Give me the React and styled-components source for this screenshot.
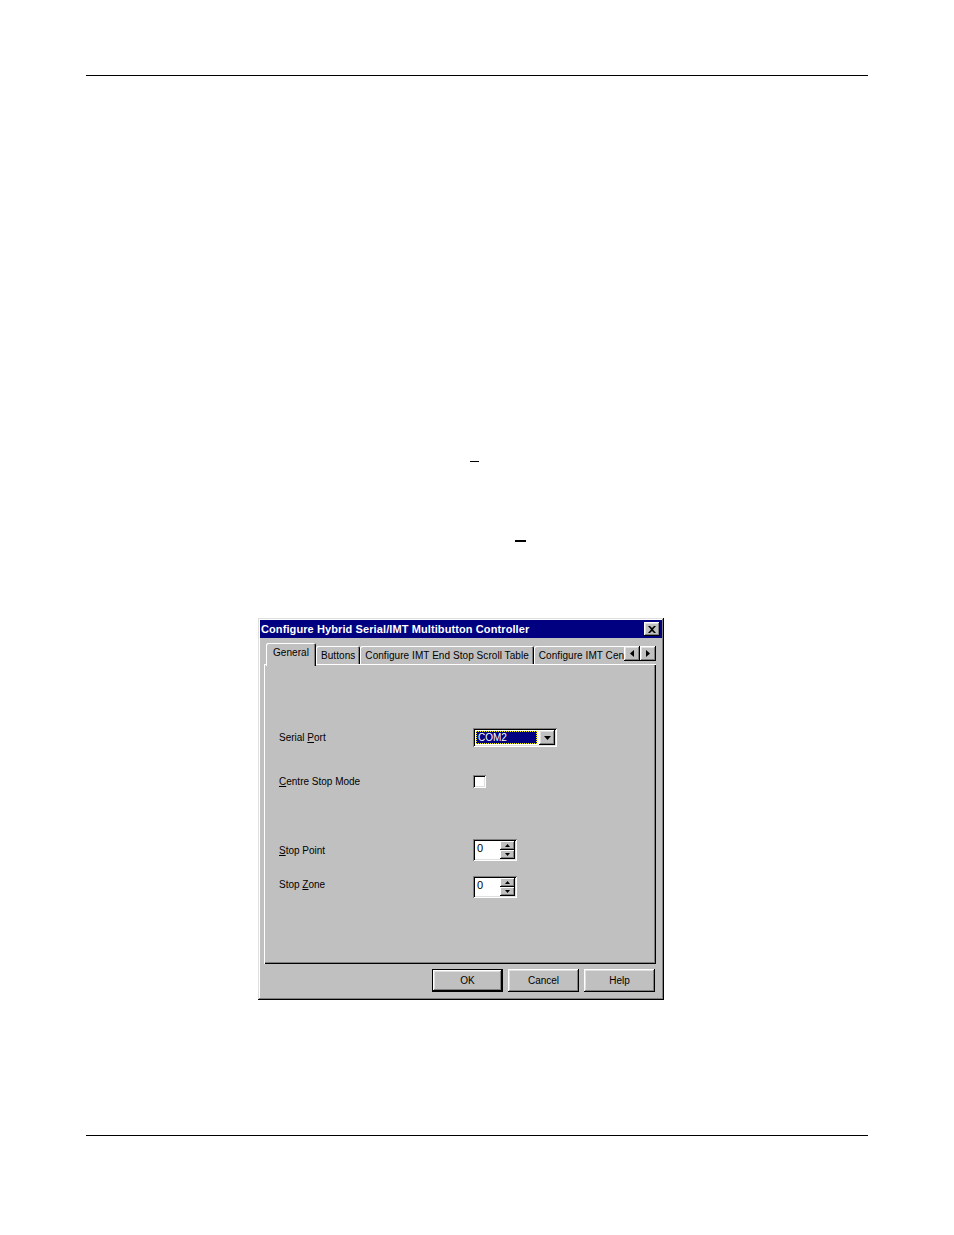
import styled, { createGlobalStyle } from "styled-components";

const GlobalStyle = createGlobalStyle`
  html, body {
    margin: 0;
    padding: 0;
    background: #fff;
  }
  body {
    font-family: "Liberation Sans", Arial, sans-serif;
    color: #000;
  }
`;

const raised = `
  box-shadow:
    inset -1px -1px 0 #000,
    inset 1px 1px 0 #fff,
    inset -2px -2px 0 #808080,
    inset 2px 2px 0 #dfdfdf;
`;

const sunken = `
  box-shadow:
    inset 1px 1px 0 #808080,
    inset -1px -1px 0 #fff,
    inset 2px 2px 0 #000,
    inset -2px -2px 0 #dfdfdf;
`;

// the last tab is cut by the scroll arrows in the original
const tabs = [
  { label: "General", selected: true },
  { label: "Buttons" },
  { label: "Configure IMT End Stop Scroll Table" },
  { label: "Configure IMT Cen" },
];

function Accel({ text, at }) {
  return (
    <>
      {text.slice(0, at)}
      <u>{text[at]}</u>
      {text.slice(at + 1)}
    </>
  );
}

function Triangle({ dir }) {
  const pts = {
    down: "0,0 7,0 3.5,4",
    up: "0,3 5,3 2.5,0",
    downSmall: "0,0 5,0 2.5,3",
    left: "4,0 4,7 0,3.5",
    right: "0,0 0,7 4,3.5",
  }[dir];
  const size = {
    down: [7, 4],
    up: [5, 3],
    downSmall: [5, 3],
    left: [4, 7],
    right: [4, 7],
  }[dir];
  return (
    <svg width={size[0]} height={size[1]} viewBox={`0 0 ${size[0]} ${size[1]}`}>
      <polygon points={pts} fill="#000" />
    </svg>
  );
}

function Spinner({ value }) {
  return (
    <SpinBox>
      <SpinValue>{value}</SpinValue>
      <SpinButtons>
        <SpinButton>
          <Triangle dir="up" />
        </SpinButton>
        <SpinButton>
          <Triangle dir="downSmall" />
        </SpinButton>
      </SpinButtons>
    </SpinBox>
  );
}

export default function App() {
  return (
    <Page>
      <GlobalStyle />
      <Rule $top={75} />
      <Mark $top={385} $left={470} $w={9} $h={1} />
      <Mark $top={78} $left={515} $w={11} $h={2} />

      <Dialog>
        <TitleBar>
          <TitleText>Configure Hybrid Serial/IMT Multibutton Controller</TitleText>
          <CloseButton>
            <svg width="8" height="7" viewBox="0 0 8 7">
              <path d="M0 0h2l2 2 2-2h2L5 3.5 8 7H6L4 5 2 7H0l3-3.5z" fill="#000" />
            </svg>
          </CloseButton>
        </TitleBar>

        <Body>
          <TabStrip>
            <TabList>
              {tabs.map((t) => (
                <Tab key={t.label} $selected={t.selected}>
                  {t.label}
                </Tab>
              ))}
            </TabList>
            <ScrollArrows>
              <ArrowButton>
                <Triangle dir="left" />
              </ArrowButton>
              <ArrowButton>
                <Triangle dir="right" />
              </ArrowButton>
            </ScrollArrows>
          </TabStrip>

          <Panel>
            <Row $top={64} $h={19}>
              <Label>
                <Accel text="Serial Port" at={7} />
              </Label>
              <Combo>
                <ComboField>COM2</ComboField>
                <ComboButton>
                  <Triangle dir="down" />
                </ComboButton>
              </Combo>
            </Row>
            <Row $top={28} $h={13}>
              <Label>
                <Accel text="Centre Stop Mode" at={0} />
              </Label>
              <Checkbox />
            </Row>
            <Row $top={51} $h={22}>
              <Label>
                <Accel text="Stop Point" at={0} />
              </Label>
              <Spinner value="0" />
            </Row>
            <Row $top={15} $h={22}>
              <Label $raise={3}>
                <Accel text="Stop Zone" at={5} />
              </Label>
              <Spinner value="0" />
            </Row>
          </Panel>

          <ButtonRow>
            <PushButton $default>OK</PushButton>
            <PushButton>Cancel</PushButton>
            <PushButton>Help</PushButton>
          </ButtonRow>
        </Body>
      </Dialog>

      <Rule $top={135} />
    </Page>
  );
}

const Page = styled.div`
  width: 954px;
  height: 1235px;
  display: flex;
  flex-direction: column;
  align-items: flex-start;
  overflow: hidden;
`;

const Rule = styled.div`
  margin: ${(p) => p.$top}px 0 0 86px;
  width: 782px;
  height: 1px;
  background: #000;
`;

const Mark = styled.div`
  margin: ${(p) => p.$top}px 0 0 ${(p) => p.$left}px;
  width: ${(p) => p.$w}px;
  height: ${(p) => p.$h}px;
  background: #000;
`;

const Dialog = styled.div`
  margin: 76px 0 0 258px;
  width: 406px;
  height: 382px;
  box-sizing: border-box;
  padding: 2px;
  background: #c0c0c0;
  display: flex;
  flex-direction: column;
  font-size: 10px;
  box-shadow:
    inset -1px -1px 0 #000,
    inset 1px 1px 0 #dfdfdf,
    inset -2px -2px 0 #808080,
    inset 2px 2px 0 #fff;
`;

const TitleBar = styled.div`
  height: 18px;
  background: #000080;
  display: flex;
  align-items: center;
  justify-content: space-between;
  padding: 0 2px 0 1px;
`;

const TitleText = styled.span`
  color: #fff;
  font-weight: bold;
  font-size: 11px;
  letter-spacing: 0.1px;
  white-space: nowrap;
`;

const CloseButton = styled.div`
  width: 16px;
  height: 14px;
  background: #c0c0c0;
  display: flex;
  align-items: center;
  justify-content: center;
  ${raised}
`;

const Body = styled.div`
  margin: 0 6px 0 4px;
  display: flex;
  flex-direction: column;
`;

const TabStrip = styled.div`
  margin-top: 5px;
  margin-bottom: -2px;
  height: 23px;
  display: flex;
  position: relative;
  z-index: 1;
`;

const TabList = styled.div`
  width: 360px;
  height: 23px;
  overflow: hidden;
  display: flex;
  align-items: flex-end;
  padding-left: 2px;
  box-sizing: border-box;
  flex-shrink: 0;
`;

const Tab = styled.div`
  flex-shrink: 0;
  height: ${(p) => (p.$selected ? 23 : 18)}px;
  margin-bottom: ${(p) => (p.$selected ? 0 : 2)}px;
  padding: ${(p) => (p.$selected ? "2px 7px 0 7px" : "2px 5px 0 5px")};
  box-sizing: border-box;
  display: flex;
  align-items: ${(p) => (p.$selected ? "flex-start" : "center")};
  background: #c0c0c0;
  border-radius: 2px 2px 0 0;
  white-space: nowrap;
  letter-spacing: 0.06px;
  line-height: ${(p) => (p.$selected ? "16px" : "14px")};
  box-shadow:
    inset 1px 1px 0 #fff,
    inset -1px 0 0 #000,
    inset -2px 0 0 #808080;
`;

const ScrollArrows = styled.div`
  display: flex;
  margin-top: 3px;
  height: 15px;
`;

const ArrowButton = styled.div`
  width: 16px;
  height: 15px;
  background: #c0c0c0;
  display: flex;
  align-items: center;
  justify-content: center;
  ${raised}
`;

const Panel = styled.div`
  height: 300px;
  box-sizing: border-box;
  padding-left: 15px;
  display: flex;
  flex-direction: column;
  box-shadow:
    inset 1px 1px 0 #fff,
    inset -1px -1px 0 #000,
    inset -2px -2px 0 #808080;
`;

const Row = styled.div`
  margin-top: ${(p) => p.$top}px;
  height: ${(p) => p.$h}px;
  display: grid;
  grid-template-columns: 194px auto;
  align-items: center;
`;

const Label = styled.span`
  white-space: nowrap;
  position: relative;
  top: ${(p) => -(p.$raise || 0)}px;
`;

const Combo = styled.div`
  width: 84px;
  height: 19px;
  box-sizing: border-box;
  padding: 2px;
  background: #fff;
  display: flex;
  align-items: stretch;
  ${sunken}
`;

const ComboField = styled.div`
  flex: 1;
  margin: 1px 2px 1px 1px;
  background: #000080;
  color: #fff;
  outline: 1px dotted #ffff00;
  outline-offset: -1px;
  padding-left: 2px;
  display: flex;
  align-items: center;
  line-height: 11px;
`;

const ComboButton = styled.div`
  width: 16px;
  background: #c0c0c0;
  display: flex;
  align-items: center;
  justify-content: center;
  ${raised}
`;

const Checkbox = styled.div`
  width: 13px;
  height: 13px;
  background: #fff;
  ${sunken}
`;

const SpinBox = styled.div`
  width: 44px;
  height: 22px;
  box-sizing: border-box;
  padding: 2px;
  background: #fff;
  display: flex;
  ${sunken}
`;

const SpinValue = styled.div`
  flex: 1;
  padding: 1px 0 0 2px;
  font-size: 11px;
  line-height: 12px;
`;

const SpinButtons = styled.div`
  width: 15px;
  display: flex;
  flex-direction: column;
`;

const SpinButton = styled.div`
  flex: 1;
  background: #c0c0c0;
  display: flex;
  align-items: center;
  justify-content: center;
  box-shadow:
    inset -1px -1px 0 #000,
    inset 1px 1px 0 #fff,
    inset -2px -2px 0 #808080;
`;

const ButtonRow = styled.div`
  margin-top: 5px;
  display: flex;
  justify-content: flex-end;
  gap: 5px;
  padding-right: 1px;
`;

const PushButton = styled.button`
  width: 71px;
  height: 23px;
  padding: 0;
  margin: 0;
  border: ${(p) => (p.$default ? "1px solid #000" : "0")};
  background: #c0c0c0;
  font-family: "Liberation Sans", Arial, sans-serif;
  font-size: 10px;
  color: #000;
  ${raised}
`;
